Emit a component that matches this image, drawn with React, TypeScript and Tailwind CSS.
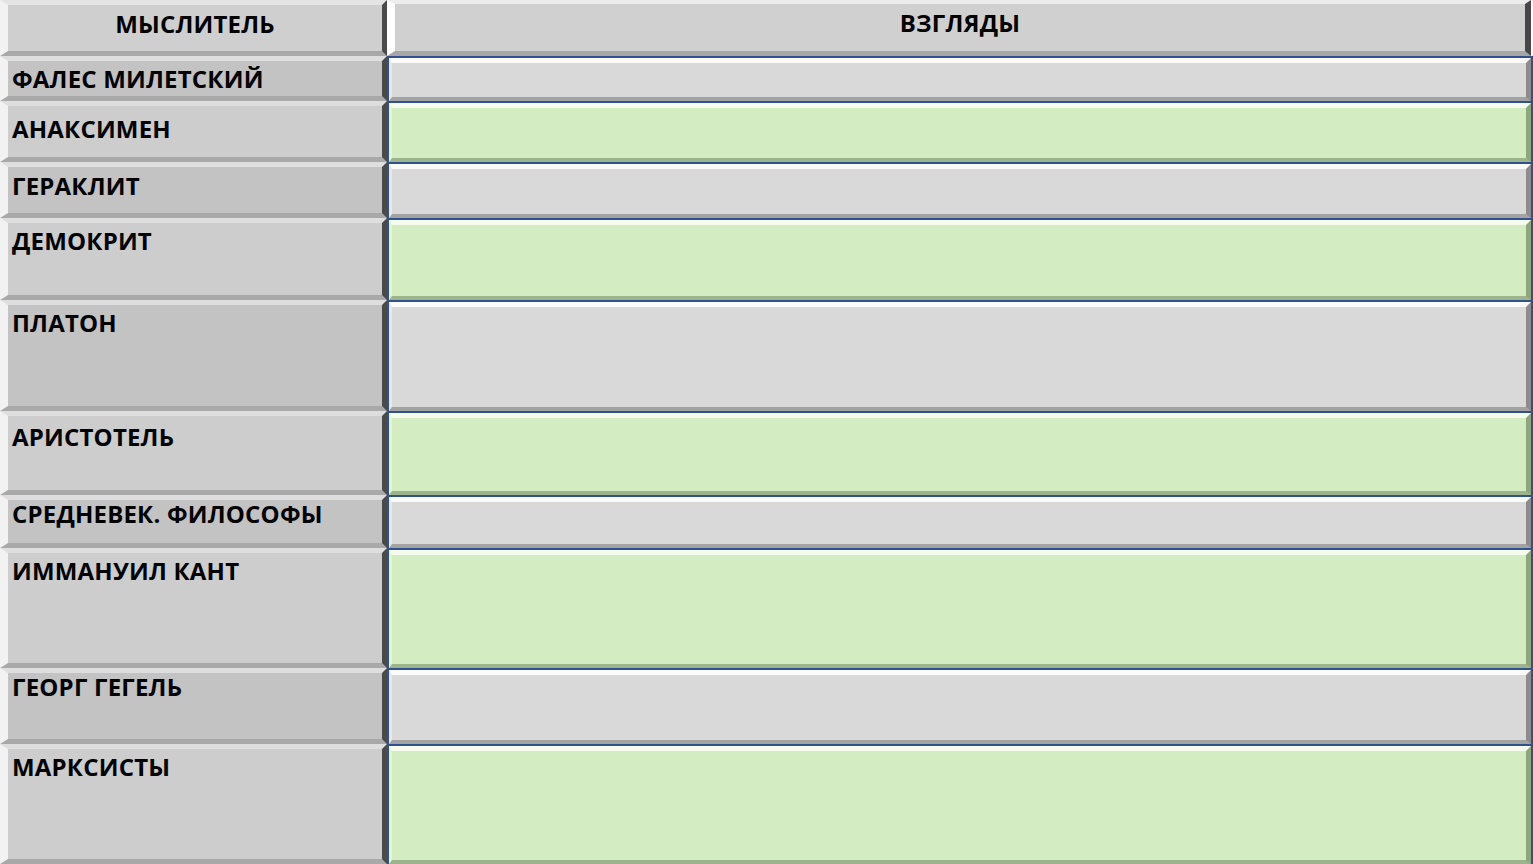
import React from "react";

type Row = { name: string; h: string; pt: string; green: boolean; dark: boolean };

const rows: Row[] = [
  { name: "ФАЛЕС МИЛЕТСКИЙ", h: "h-[45px]", pt: "pt-[4px]", green: false, dark: true },
  { name: "АНАКСИМЕН", h: "h-[61px]", pt: "pt-[9px]", green: true, dark: false },
  { name: "ГЕРАКЛИТ", h: "h-[56px]", pt: "pt-[5px]", green: false, dark: true },
  { name: "ДЕМОКРИТ", h: "h-[82px]", pt: "pt-[4px]", green: true, dark: false },
  { name: "ПЛАТОН", h: "h-[111px]", pt: "pt-[4px]", green: false, dark: true },
  { name: "АРИСТОТЕЛЬ", h: "h-[84px]", pt: "pt-[7px]", green: true, dark: false },
  { name: "СРЕДНЕВЕК. ФИЛОСОФЫ", h: "h-[53px]", pt: "pt-[0px]", green: false, dark: true },
  { name: "ИММАНУИЛ КАНТ", h: "h-[120px]", pt: "pt-[4px]", green: true, dark: false },
  { name: "ГЕОРГ ГЕГЕЛЬ", h: "h-[76px]", pt: "pt-[0px]", green: false, dark: true },
  { name: "МАРКСИСТЫ", h: "h-[120px]", pt: "pt-[4px]", green: true, dark: false },
];

const font = { fontFamily: '"Open Sans", "Liberation Sans", sans-serif' };

export default function App() {
  return (
    <div className="w-[1533px] h-[864px] bg-white overflow-hidden" style={font}>
      {/* header */}
      <div className="flex h-[56px]">
        <div className="w-[387px] h-full box-border border-l-[8px] border-t-[5px] border-r-[5px] border-b-[5px] border-l-[#f2f2f2] border-t-[#e4e4e4] border-r-[#4a4a4a] border-b-[#a8a8a8] bg-[#cfcfcf] flex items-center justify-center">
          <span className="text-[24px] leading-[28px] font-bold text-black tracking-[0.2px] -mt-[9px]">МЫСЛИТЕЛЬ</span>
        </div>
        <div className="flex-1 h-full box-border border-l-[8px] border-t-[4px] border-r-[6px] border-b-[5px] border-l-[#ffffff] border-t-[#ececec] border-r-[#474747] border-b-[#a6a6a6] bg-[#d0d0d0] mr-[2px] flex items-center justify-center">
          <span className="text-[24px] leading-[28px] font-bold text-black tracking-[0.2px] -mt-[9px]">ВЗГЛЯДЫ</span>
        </div>
      </div>
      {rows.map((r, i) => (
        <div key={i} className={`flex ${r.h}`}>
          <div
            className={`w-[387px] h-full box-border border-l-[8px] border-t-[5px] border-r-[5px] border-b-[5px] border-l-[#f2f2f2] border-t-[#dedede] border-r-[#4a4a4a] border-b-[#a9a9a9] ${
              r.dark ? "bg-[#c3c3c3]" : "bg-[#cdcdcd]"
            } pl-[4px] ${r.pt}`}
          >
            <span className="block text-[24px] leading-[28px] font-bold text-black tracking-[0.2px] whitespace-nowrap">
              {r.name}
            </span>
          </div>
          <div className="flex-1 h-full box-border border-l-[2px] border-t-[2px] border-r-[2px] border-[#2f528f] bg-white">
            <div
              className={`w-full h-full box-border border-l-[3px] border-t-[5px] border-r-[5px] border-b-[4px] ${
                r.green
                  ? "bg-[#d3ecc1] border-l-[#e4f5d6] border-t-[#f5fced] border-r-[#8ea67c] border-b-[#9db38c]"
                  : "bg-[#d9d9d9] border-l-[#e8e8e8] border-t-[#fafafa] border-r-[#8c8c8c] border-b-[#a3a3a3]"
              }`}
            />
          </div>
        </div>
      ))}
    </div>
  );
}
